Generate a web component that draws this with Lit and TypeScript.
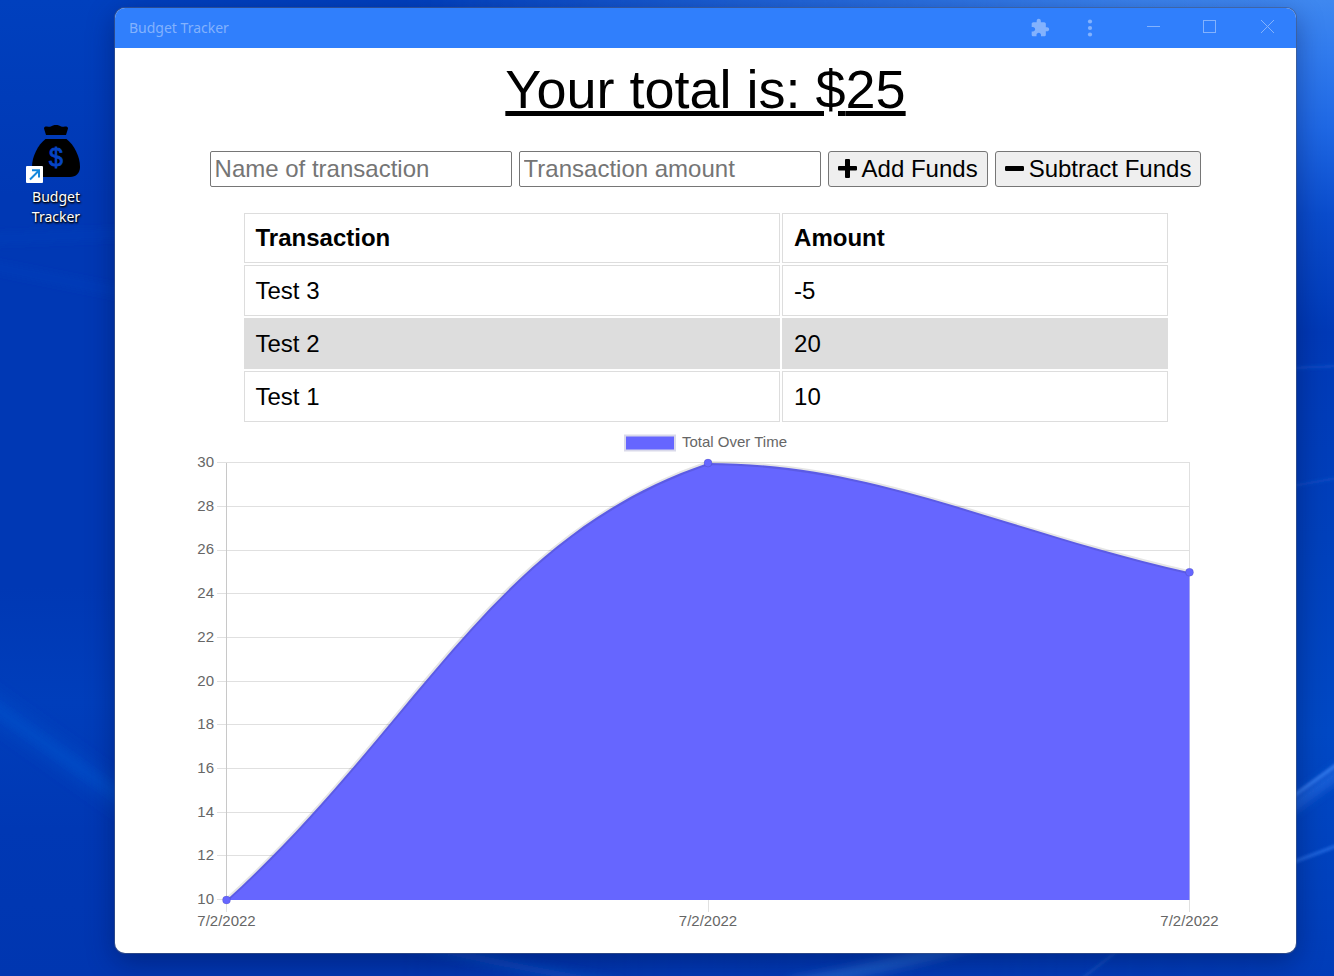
import { LitElement, html, svg, css } from "lit";
import { customElement, property, state } from "lit/decorators.js";

interface Transaction {
  name: string;
  value: number;
}

interface Sample {
  label: string;
  total: number;
}

@customElement("desktop-wallpaper")
class DesktopWallpaper extends LitElement {
  static styles = css`
    :host {
      display: block;
    }
    svg {
      display: block;
      width: 100%;
      height: 100%;
    }
  `;

  render() {
    return html`
      <svg viewBox="0 0 1334 976" preserveAspectRatio="none" aria-hidden="true">
        <defs>
          <linearGradient id="base" x1="0" y1="0" x2="0" y2="1">
            <stop offset="0" stop-color="#0040be" />
            <stop offset="0.2" stop-color="#0038b4" />
            <stop offset="0.6" stop-color="#0038b4" />
            <stop offset="0.72" stop-color="#003ebb" />
            <stop offset="0.85" stop-color="#0038b4" />
            <stop offset="1" stop-color="#0036b0" />
          </linearGradient>
          <linearGradient id="right" x1="0" y1="0" x2="0" y2="1">
            <stop offset="0" stop-color="#3f88f0" />
            <stop offset="0.05" stop-color="#327cee" />
            <stop offset="0.13" stop-color="#1f68e4" />
            <stop offset="0.22" stop-color="#0a4ccc" />
            <stop offset="0.34" stop-color="#0039b6" />
            <stop offset="0.55" stop-color="#0040bb" />
            <stop offset="0.75" stop-color="#0048c4" />
            <stop offset="1" stop-color="#003cb8" />
          </linearGradient>
          <linearGradient id="fade" x1="0" y1="0" x2="1" y2="0">
            <stop offset="0.3" stop-color="#000" />
            <stop offset="0.6" stop-color="#888" />
            <stop offset="0.85" stop-color="#eee" />
            <stop offset="0.95" stop-color="#fff" />
          </linearGradient>
          <mask id="rightMask">
            <rect width="1334" height="976" fill="url(#fade)" />
          </mask>
          <filter id="soft" x="-50%" y="-50%" width="200%" height="200%">
            <feGaussianBlur stdDeviation="9" />
          </filter>
          <filter id="fine" x="-50%" y="-50%" width="200%" height="200%">
            <feGaussianBlur stdDeviation="1.5" />
          </filter>
          <filter id="mid" x="-50%" y="-50%" width="200%" height="200%">
            <feGaussianBlur stdDeviation="5" />
          </filter>
        </defs>
        <rect width="1334" height="976" fill="url(#base)" />
        <rect width="1334" height="976" fill="url(#right)" mask="url(#rightMask)" />
        <path d="M-30 690L160 825" stroke="#034cc6" stroke-width="16" filter="url(#soft)" />
        <path d="M-30 690L160 825" stroke="#0650ca" stroke-width="3" filter="url(#mid)" />
        <path d="M-30 262L160 300M-30 240L160 232" stroke="#0440bd" stroke-width="4" filter="url(#mid)" />
        <path d="M1270 822L1360 757" stroke="#1c60d8" stroke-width="12" filter="url(#mid)" />
        <path d="M1270 813L1360 748" stroke="#347cee" stroke-width="3" filter="url(#fine)" />
        <path d="M1270 871L1360 837" stroke="#2068e0" stroke-width="3" filter="url(#fine)" />
        <path d="M1270 369L1360 365M1270 490L1360 474" stroke="#0848c2" stroke-width="3" filter="url(#fine)" />
        <path d="M400 940Q500 965 620 985" fill="none" stroke="#0a4cc0" stroke-width="8" filter="url(#mid)" />
        <path d="M1000 935Q920 960 790 985" fill="none" stroke="#1c5cc8" stroke-width="12" filter="url(#mid)" />
        <path d="M1125 945L1080 980" stroke="#0c4cc0" stroke-width="3" filter="url(#fine)" />
      </svg>
    `;
  }
}

@customElement("desktop-shortcut")
class DesktopShortcut extends LitElement {
  @property() label = "";

  static styles = css`
    :host {
      display: block;
    }
    .shortcut {
      display: flex;
      flex-direction: column;
      align-items: center;
      gap: 2px;
      width: 72px;
      margin: 0;
      padding: 0;
      border: 0;
      background: none;
      color: #fff;
      font: 14px/20px "Segoe UI", "Noto Sans", sans-serif;
      text-shadow: 1px 1px 2px #000, 0 1px 2px #000;
      cursor: pointer;
    }
    .art {
      display: block;
      width: 60px;
      height: 60px;
    }
    .dollar {
      font: 25px "Liberation Sans", Arial, sans-serif;
      fill: #0644c4;
      stroke: #0644c4;
      stroke-width: 0.8px;
      text-anchor: middle;
      text-shadow: none;
    }
  `;

  render() {
    return html`
      <button class="shortcut" type="button">
        <svg class="art" viewBox="0 0 60 60" aria-hidden="true">
          <path d="M18 3.500C18 1.500 20 1.300 22 1.700C24 2.200 25 1 27 0.400C29 -0.100 31 -0.100 33 0.400C35 1 36 2.200 38 1.700C40 1.300 42 1.500 42 3.500L40 10H20Z" />
          <path d="M19.500 14H40.500C48 20 54 31 54 42C54 48 50 52 44 52H16C10 52 6 48 6 42C6 31 12 20 19.500 14Z" />
          <text class="dollar" x="30" y="41">$</text>
          <rect x="0" y="41" width="17" height="17" rx="1" fill="#fff" />
          <path d="M4 54.500L12.500 46M6 45.300H13V52.500" fill="none" stroke="#1688dc" stroke-width="2" />
        </svg>
        <span>${this.label}</span>
      </button>
    `;
  }
}

@customElement("total-chart")
class TotalChart extends LitElement {
  @property({ attribute: false }) samples: Sample[] = [];

  static styles = css`
    :host {
      display: block;
    }
    .chart {
      display: block;
      width: 100%;
      overflow: visible;
    }
    text {
      font: 15px "Liberation Sans", Arial, sans-serif;
      fill: #666;
    }
    .tick-y {
      text-anchor: end;
    }
    .tick-x {
      text-anchor: middle;
    }
    .grid {
      stroke: #e0e0e0;
      stroke-width: 1px;
      shape-rendering: crispEdges;
    }
    .axis {
      stroke: #c8c8c8;
      stroke-width: 1px;
      shape-rendering: crispEdges;
    }
    .fill {
      fill: #6666ff;
    }
    .line {
      fill: none;
      stroke: rgba(0, 0, 0, 0.1);
      stroke-width: 4px;
    }
    .dot {
      fill: #6666ff;
      stroke: rgba(0, 0, 0, 0.1);
      stroke-width: 1px;
    }
    .key {
      fill: #6666ff;
      stroke: #d9d9ea;
      stroke-width: 2px;
    }
  `;

  render() {
    const left = 34.5;
    const right = 997.5;
    const top = 37;
    const bottom = 474;
    const min = 10;
    const max = 30;
    const y = (v: number) => bottom - ((v - min) / (max - min)) * (bottom - top);
    const step = (right - left) / (this.samples.length - 1);
    const pts = this.samples.map((s, i) => ({ x: left + i * step, y: y(s.total), label: s.label }));
    const tension = 0.4;
    const clamp = (v: number) => Math.min(bottom, Math.max(top, v));

    // Each point gets a handle on both sides, scaled by the distance to its neighbours.
    const handles = pts.map((p, i) => {
      const a = pts[i - 1] ?? p;
      const b = pts[i + 1] ?? p;
      const da = Math.hypot(p.x - a.x, p.y - a.y);
      const db = Math.hypot(b.x - p.x, b.y - p.y);
      const fa = (tension * da) / (da + db);
      const fb = (tension * db) / (da + db);
      return {
        inX: p.x - fa * (b.x - a.x),
        inY: clamp(p.y - fa * (b.y - a.y)),
        outX: p.x + fb * (b.x - a.x),
        outY: clamp(p.y + fb * (b.y - a.y)),
      };
    });
    const curve = pts
      .map((p, i) =>
        i === 0
          ? `M${p.x} ${p.y}`
          : `C${handles[i - 1].outX} ${handles[i - 1].outY} ${handles[i].inX} ${handles[i].inY} ${p.x} ${p.y}`
      )
      .join("");
    const ticks = Array.from({ length: 11 }, (_, i) => min + i * 2);

    return html`
      <svg class="chart" viewBox="0 0 1027 508" role="img" aria-label="Total Over Time">
        <rect class="key" x="433" y="9.500" width="50" height="15" />
        <text x="490" y="21">Total Over Time</text>
        ${ticks.map(
          (t) => svg`
            <line class="grid" x1=${left - 10} x2=${right} y1=${y(t) - 0.4} y2=${y(t) - 0.4} />
            <text class="tick-y" x="22" y=${y(t) + 4}>${t}</text>`
        )}
        ${pts.map(
          (p, i) => svg`
            <line class=${i === 0 ? "axis" : "grid"} x1=${p.x} x2=${p.x} y1=${top} y2=${bottom} />
            <line class="grid" x1=${p.x} x2=${p.x} y1=${bottom} y2=${bottom + 12} />
            <text class="tick-x" x=${p.x} y=${bottom + 26}>${p.label}</text>`
        )}
        <path class="fill" d=${`${curve}V${bottom}H${left}Z`} />
        <path class="line" d=${curve} />
        ${pts.map((p) => svg`<circle class="dot" cx=${p.x} cy=${p.y} r="4" />`)}
      </svg>
    `;
  }
}

@customElement("app-root")
class AppRoot extends LitElement {
  @state() private transactions: Transaction[] = [
    { name: "Test 3", value: -5 },
    { name: "Test 2", value: 20 },
    { name: "Test 1", value: 10 },
  ];

  static styles = css`
    :host {
      display: block;
      font-family: "Liberation Sans", Arial, sans-serif;
    }
    .desktop {
      position: relative;
      display: grid;
      grid-template-columns: 95px minmax(0, 1fr);
      min-height: 100vh;
      box-sizing: border-box;
      padding: 8px 38px 23px 20px;
      align-items: start;
      overflow: hidden;
    }
    .wallpaper {
      position: absolute;
      inset: 0;
    }
    .icons {
      position: relative;
      padding-top: 117px;
    }
    .window {
      position: relative;
      border-radius: 10px;
      background: #fff;
      box-shadow: 0 0 0 1px rgba(70, 90, 130, 0.6), 0 8px 28px rgba(0, 10, 60, 0.4);
      overflow: hidden;
    }
    .titlebar {
      display: flex;
      align-items: center;
      height: 40px;
      padding-left: 14px;
      background: #307ffc;
      color: #83b2fd;
    }
    .title {
      flex: 1;
      font: 14px/20px "Segoe UI", "Noto Sans", sans-serif;
    }
    .tools {
      display: flex;
      margin-right: 10px;
    }
    .tool,
    .control {
      display: flex;
      align-items: center;
      justify-content: center;
      height: 40px;
      padding: 0;
      border: 0;
      background: none;
      color: inherit;
    }
    .tool {
      width: 50px;
    }
    .control {
      width: 57px;
    }
    .controls {
      display: flex;
    }
    .content {
      padding: 10px 77px 19px;
    }
    h1 {
      margin: 0 0 31px;
      font-size: 54px;
      line-height: 62px;
      font-weight: 400;
      text-align: center;
      text-decoration: underline;
    }
    .form {
      display: flex;
      flex-wrap: wrap;
      justify-content: center;
      gap: 7px;
      margin-bottom: 24px;
    }
    .field,
    .action {
      box-sizing: border-box;
      height: 36px;
      margin: 0;
      border: 1px solid #767676;
      border-radius: 2px;
      font: 24px/28px "Liberation Sans", Arial, sans-serif;
      color: #000;
    }
    .field {
      width: 302px;
      padding: 2px 4px;
      background: #fff;
    }
    .field::placeholder {
      color: #757575;
      opacity: 1;
    }
    .action {
      display: flex;
      align-items: center;
      gap: 5px;
      padding: 0 9px;
      border-radius: 3px;
      background: #efefef;
    }
    .action svg {
      margin-bottom: 2px;
    }
    .ledger {
      table-layout: fixed;
      width: calc(100% - 99px);
      border-collapse: separate;
      border-spacing: 2px;
      margin: 0 auto 2px;
      font-size: 24px;
    }
    .name-col {
      width: 58.2%;
    }
    th,
    td {
      padding: 11px;
      border: 1px solid #ddd;
      text-align: left;
      line-height: 27px;
    }
    th {
      line-height: 26px;
    }
    tbody tr:nth-child(even) td {
      background: #ddd;
    }
  `;

  render() {
    const ordered = [...this.transactions].reverse();
    let running = 0;
    const samples = ordered.map((t) => ({ label: "7/2/2022", total: (running += t.value) }));

    return html`
      <div class="desktop">
        <desktop-wallpaper class="wallpaper"></desktop-wallpaper>
        <div class="icons">
          <desktop-shortcut label="Budget Tracker"></desktop-shortcut>
        </div>
        <section class="window">
          <header class="titlebar">
            <span class="title">Budget Tracker</span>
            <div class="tools">
              <button class="tool" type="button" aria-label="Extensions">
                <svg width="20" height="20" viewBox="0 0 24 24" fill="currentColor">
                  <path d="M20.500 11H19V7c0-1.100-.9-2-2-2h-4V3.500C13 2.120 11.880 1 10.500 1S8 2.120 8 3.500V5H4c-1.100 0-1.990.9-1.990 2v3.800H3.500c1.490 0 2.700 1.210 2.700 2.700s-1.210 2.700-2.700 2.700H2V20c0 1.100.9 2 2 2h3.800v-1.500c0-1.490 1.210-2.700 2.700-2.700s2.700 1.210 2.700 2.700V22H17c1.100 0 2-.9 2-2v-4h1.500c1.380 0 2.500-1.120 2.500-2.500S21.880 11 20.500 11z" />
                </svg>
              </button>
              <button class="tool" type="button" aria-label="Menu">
                <svg width="6" height="20" viewBox="0 0 6 20" fill="currentColor">
                  <circle cx="3" cy="3.500" r="2.100" />
                  <circle cx="3" cy="10" r="2.100" />
                  <circle cx="3" cy="16.500" r="2.100" />
                </svg>
              </button>
            </div>
            <div class="controls">
              <button class="control" type="button" aria-label="Minimize">
                <svg width="13" height="16" viewBox="0 0 13 16" stroke="currentColor"><path d="M0 6.500H13" /></svg>
              </button>
              <button class="control" type="button" aria-label="Maximize">
                <svg width="15" height="16" viewBox="0 0 15 16" fill="none" stroke="currentColor">
                  <rect x="0.500" y="0.500" width="12" height="12" />
                </svg>
              </button>
              <button class="control" type="button" aria-label="Close">
                <svg width="13" height="16" viewBox="0 0 13 16" stroke="currentColor">
                  <path d="M0 0L13 13M13 0L0 13" />
                </svg>
              </button>
            </div>
          </header>
          <main class="content">
            <h1>Your total is: $${running}</h1>
            <form class="form" @submit=${(e: Event) => e.preventDefault()}>
              <input class="field" type="text" aria-label="Name of transaction" placeholder="Name of transaction" />
              <input class="field" type="number" min="0" aria-label="Transaction amount" placeholder="Transaction amount" />
              <button class="action" type="button">
                <svg width="19" height="19" viewBox="0 0 19 19" aria-hidden="true">
                  <path d="M8 0H11Q12 0 12 1V7H18Q19 7 19 8V10.500Q19 11.500 18 11.500H12V18Q12 19 11 19H8Q7 19 7 18V11.500H1Q0 11.500 0 10.500V8Q0 7 1 7H7V1Q7 0 8 0Z" />
                </svg>
                Add Funds
              </button>
              <button class="action" type="button">
                <svg width="19" height="19" viewBox="0 0 19 19" aria-hidden="true">
                  <rect x="0" y="7" width="19" height="5" rx="1.200" />
                </svg>
                Subtract Funds
              </button>
            </form>
            <table class="ledger">
              <colgroup>
                <col class="name-col" />
                <col />
              </colgroup>
              <thead>
                <tr>
                  <th scope="col">Transaction</th>
                  <th scope="col">Amount</th>
                </tr>
              </thead>
              <tbody>
                ${this.transactions.map(
                  (t) => html`<tr>
                    <td>${t.name}</td>
                    <td>${t.value}</td>
                  </tr>`
                )}
              </tbody>
            </table>
            <total-chart .samples=${samples}></total-chart>
          </main>
        </section>
      </div>
    `;
  }
}
